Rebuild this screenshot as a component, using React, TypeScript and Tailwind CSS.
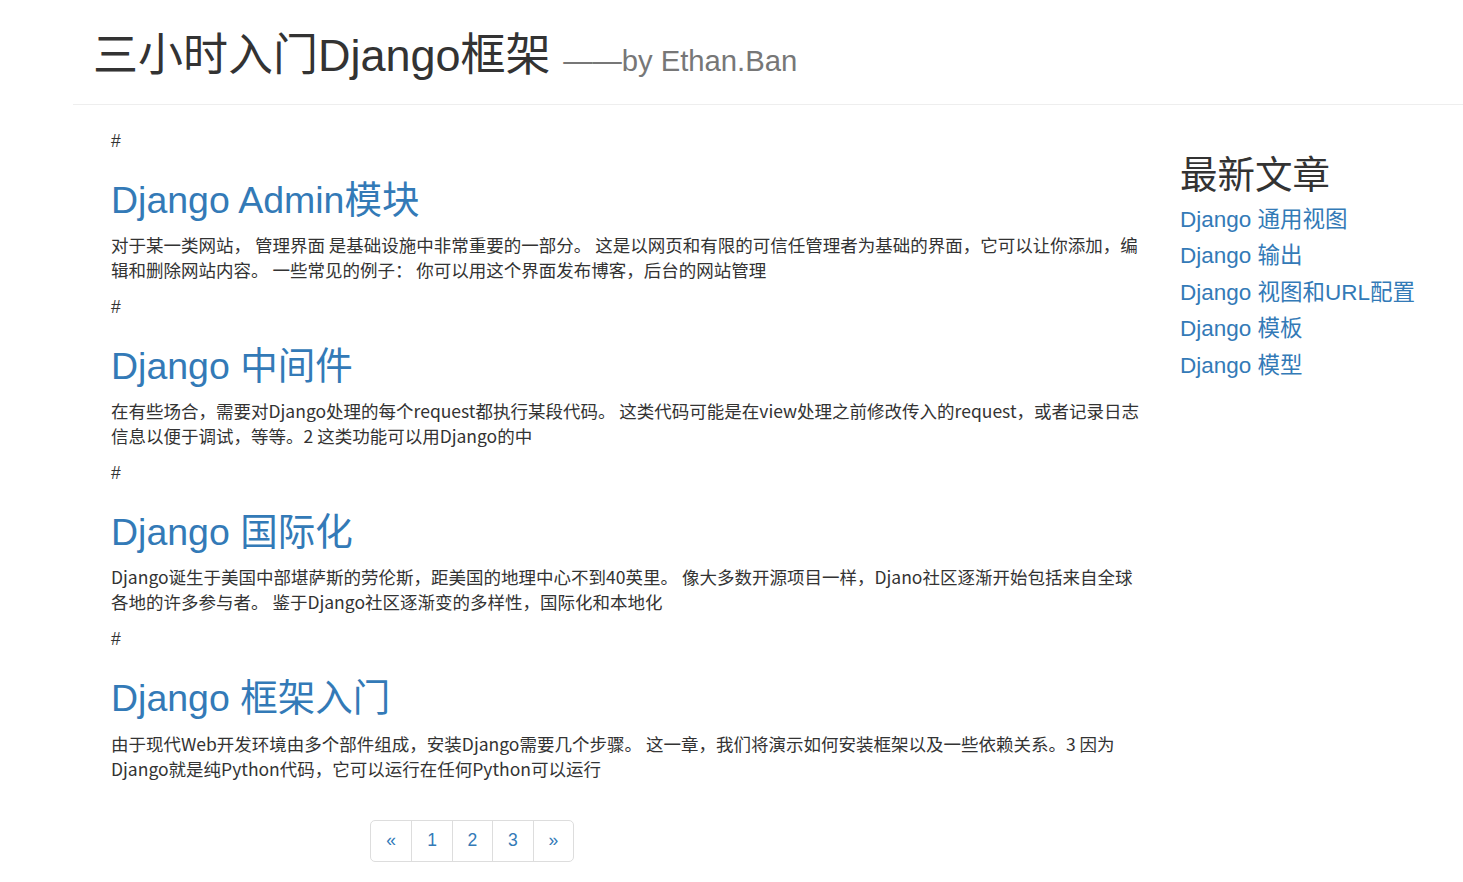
import React from "react";

const posts: { title: string; lines: string[] }[] = [
  {
    title: "Django Admin模块",
    lines: [
      "对于某一类网站， 管理界面 是基础设施中非常重要的一部分。 这是以网页和有限的可信任管理者为基础的界面，它可以让你添加，编",
      "辑和删除网站内容。 一些常见的例子： 你可以用这个界面发布博客，后台的网站管理",
    ],
  },
  {
    title: "Django 中间件",
    lines: [
      "在有些场合，需要对Django处理的每个request都执行某段代码。 这类代码可能是在view处理之前修改传入的request，或者记录日志",
      "信息以便于调试，等等。2 这类功能可以用Django的中",
    ],
  },
  {
    title: "Django 国际化",
    lines: [
      "Django诞生于美国中部堪萨斯的劳伦斯，距美国的地理中心不到40英里。 像大多数开源项目一样，Djano社区逐渐开始包括来自全球",
      "各地的许多参与者。 鉴于Django社区逐渐变的多样性，国际化和本地化",
    ],
  },
  {
    title: "Django 框架入门",
    lines: [
      "由于现代Web开发环境由多个部件组成，安装Django需要几个步骤。 这一章，我们将演示如何安装框架以及一些依赖关系。3 因为",
      "Django就是纯Python代码，它可以运行在任何Python可以运行",
    ],
  },
];

const latest = [
  "Django 通用视图",
  "Django 输出",
  "Django 视图和URL配置",
  "Django 模板",
  "Django 模型",
];

export default function App() {
  return (
    <div className="min-h-[882px] w-[1463px] bg-white text-[#333] font-['Liberation_Sans','Noto_Sans_CJK_SC',sans-serif] overflow-hidden">
      <header className="ml-[73px] border-b border-[#eee] pb-[17px] pt-[31px]">
        <h1 className="pl-[20px] text-[45px] leading-[49.5px] font-normal text-[#333] whitespace-nowrap">
          三小时入门Django框架{" "}
          <small className="text-[29.25px] text-[#777] font-normal">——by Ethan.Ban</small>
        </h1>
      </header>

      <div className="flex pl-[111px]">
        <main className="w-[1040px] pt-[24px]">
          {posts.map((p) => (
            <article key={p.title}>
              <p className="text-[17.5px] leading-[25px] h-[25px]">#</p>
              <h2 className="mt-[26px] mb-[11px] text-[37.5px] leading-[41.25px] font-normal text-[#337ab7] whitespace-nowrap">
                {p.title}
              </h2>
              <p className="mb-[13px] text-[17.5px] leading-[25px] text-[#333] font-['Noto_Sans_CJK_SC','Liberation_Sans',sans-serif] whitespace-nowrap">
                {p.lines[0]}
                <br />
                {p.lines[1]}
              </p>
            </article>
          ))}
          <nav className="mt-[39px] ml-[259px]">
            <ul className="inline-flex rounded-[5px] border border-[#ddd] text-[17.5px] leading-[25px] text-[#337ab7]">
              {["«", "1", "2", "3", "»"].map((t, i) => (
                <li
                  key={t}
                  className={`py-[7.5px] w-[40.4px] text-center ${i > 0 ? "border-l border-[#ddd]" : ""}`}
                >
                  {t}
                </li>
              ))}
            </ul>
          </nav>
        </main>

        <aside className="ml-[29px] pt-[50px]">
          <h2 className="text-[37.5px] leading-[41.25px] font-normal text-[#333] whitespace-nowrap">最新文章</h2>
          <ul className="mt-[6px]">
            {latest.map((l) => (
              <li key={l} className="text-[22.5px] leading-[36.5px] text-[#337ab7] whitespace-nowrap">
                {l}
              </li>
            ))}
          </ul>
        </aside>
      </div>
    </div>
  );
}
